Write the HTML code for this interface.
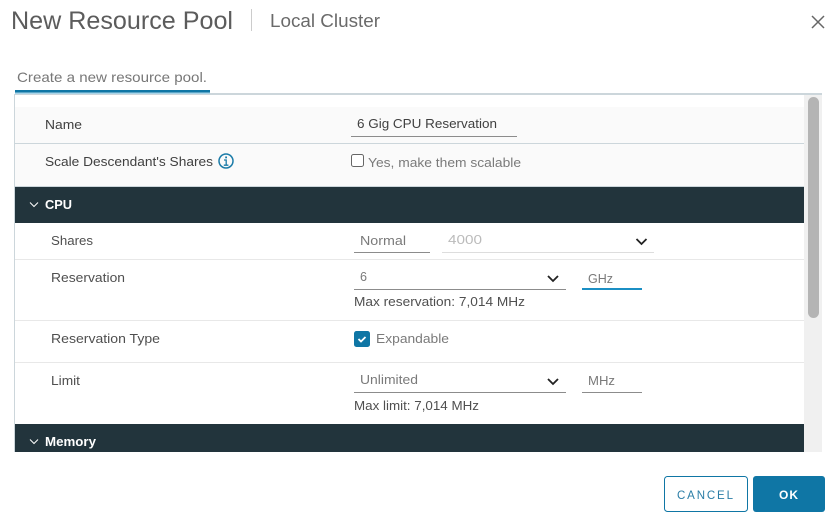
<!DOCTYPE html>
<html><head><meta charset="utf-8"><title>New Resource Pool</title>
<style>
html,body{margin:0;padding:0;background:#fff;width:833px;height:519px;overflow:hidden}
svg{display:block}
text{font-family:"Liberation Sans",sans-serif;font-size:13px;fill:#4f4f4f}
.g{fill:#7a7a7a}
.b{fill:#404040}
.w{fill:#fff;font-weight:bold}
</style></head><body>
<svg width="833" height="519" viewBox="0 0 833 519" xmlns="http://www.w3.org/2000/svg">
<text x="11" y="29" textLength="222" lengthAdjust="spacingAndGlyphs" style="font-size:25px;fill:#5c5c5c">New Resource Pool</text>
<rect x="251" y="9" width="1" height="22" fill="#ccc"/>
<text x="270" y="27" textLength="110" lengthAdjust="spacingAndGlyphs" style="font-size:18px;fill:#6a6a6a">Local Cluster</text>
<path d="M812 16L824 28M824 16L812 28" stroke="#666" stroke-width="1.500" fill="none"/>
<text x="17" y="82" textLength="190" lengthAdjust="spacingAndGlyphs" style="font-size:14px;fill:#777">Create a new resource pool.</text>
<rect x="15" y="93" width="807" height="2" fill="#ccd6db"/>
<rect x="15" y="90" width="195" height="3" fill="#0f76a5"/>
<rect x="15" y="92.500" width="195" height="1.500" fill="#a9d4e8"/>
<rect x="14" y="94" width="1" height="358" fill="#ccd6db"/>
<rect x="804" y="95" width="18" height="357" fill="#f0f0f0"/>
<rect x="808" y="97" width="11" height="221" rx="5.500" fill="#b4b4b4"/>
<rect x="15" y="107" width="789" height="79" fill="#fafafa"/>
<rect x="15" y="143" width="789" height="1" fill="#ccd6db"/>
<rect x="15" y="186" width="789" height="1" fill="#ccd6db"/>
<text x="45" y="129" textLength="37" lengthAdjust="spacingAndGlyphs" class="b">Name</text>
<text x="45" y="166" textLength="168" lengthAdjust="spacingAndGlyphs" class="b">Scale Descendant's Shares</text>
<circle cx="226" cy="161" r="7" fill="none" stroke="#1a7ba8" stroke-width="1.500"/>
<rect x="225.200" y="156.500" width="1.800" height="1.800" fill="#1a7ba8"/>
<path d="M224 160H226.200V165M223.800 165.200H228.400" stroke="#1a7ba8" stroke-width="1.300" fill="none"/>
<text x="357" y="128" textLength="140" lengthAdjust="spacingAndGlyphs" class="b">6 Gig CPU Reservation</text>
<rect x="351" y="136" width="166" height="1" fill="#8c8c8c"/>
<rect x="351.500" y="154.500" width="12" height="12" rx="2" fill="#fff" stroke="#666"/>
<text x="368" y="167" textLength="153" lengthAdjust="spacingAndGlyphs" class="g">Yes, make them scalable</text>
<rect x="15" y="187" width="789" height="36" fill="#22343c"/>
<path d="M30 202.500L34 206.500L38 202.500" stroke="#fff" stroke-width="1" fill="none"/>
<text x="45" y="209" textLength="27" lengthAdjust="spacingAndGlyphs" class="w">CPU</text>
<text x="51" y="245" textLength="42" lengthAdjust="spacingAndGlyphs">Shares</text>
<text x="360" y="245" textLength="46" lengthAdjust="spacingAndGlyphs" class="g">Normal</text>
<rect x="354" y="252" width="76" height="1" fill="#8c8c8c"/>
<text x="448" y="244" textLength="34" lengthAdjust="spacingAndGlyphs" style="fill:#bbb">4000</text>
<rect x="442" y="252" width="212" height="1" fill="#ddd"/>
<path d="M636.500 239L641.500 244L646.500 239" stroke="#222" stroke-width="1.800" fill="none"/>
<rect x="15" y="259" width="789" height="1" fill="#e8e8e8"/>
<text x="51" y="282" textLength="74" lengthAdjust="spacingAndGlyphs">Reservation</text>
<text x="360" y="281" textLength="7" lengthAdjust="spacingAndGlyphs" class="g">6</text>
<path d="M548 276L553 281L558 276" stroke="#222" stroke-width="1.800" fill="none"/>
<rect x="354" y="289" width="212" height="1" fill="#8c8c8c"/>
<text x="588" y="283" textLength="25" lengthAdjust="spacingAndGlyphs" class="g">GHz</text>
<rect x="582" y="288" width="60" height="2" fill="#1b8fc4"/>
<text x="354" y="306" textLength="171" lengthAdjust="spacingAndGlyphs">Max reservation: 7,014 MHz</text>
<rect x="15" y="320" width="789" height="1" fill="#e8e8e8"/>
<text x="51" y="343" textLength="109" lengthAdjust="spacingAndGlyphs">Reservation Type</text>
<rect x="354" y="331" width="16" height="16" rx="2.500" fill="#0f76a5"/>
<path d="M358.500 339L361 341.500L365.500 337" stroke="#fff" stroke-width="1.800" fill="none"/>
<text x="376" y="343" textLength="73" lengthAdjust="spacingAndGlyphs" class="g">Expandable</text>
<rect x="15" y="362" width="789" height="1" fill="#e8e8e8"/>
<text x="51" y="385" textLength="29" lengthAdjust="spacingAndGlyphs">Limit</text>
<text x="360" y="384" textLength="58" lengthAdjust="spacingAndGlyphs" class="g">Unlimited</text>
<path d="M548 379L553 384L558 379" stroke="#222" stroke-width="1.800" fill="none"/>
<rect x="354" y="392" width="212" height="1" fill="#8c8c8c"/>
<text x="588" y="385" textLength="27" lengthAdjust="spacingAndGlyphs" class="g">MHz</text>
<rect x="582" y="392" width="60" height="1" fill="#8c8c8c"/>
<text x="354" y="410" textLength="125" lengthAdjust="spacingAndGlyphs">Max limit: 7,014 MHz</text>
<rect x="15" y="424" width="789" height="28" fill="#22343c"/>
<path d="M30 439.500L34 443.500L38 439.500" stroke="#fff" stroke-width="1" fill="none"/>
<text x="45" y="446" textLength="51" lengthAdjust="spacingAndGlyphs" class="w">Memory</text>
<rect x="664.500" y="476.500" width="83" height="35" rx="3" fill="#fff" stroke="#0f76a5"/>
<text x="677" y="499" textLength="56" lengthAdjust="spacing" style="font-size:11.500px;fill:#2a7da6">CANCEL</text>
<rect x="753" y="476" width="72" height="36" rx="3" fill="#0f76a5"/>
<text x="779" y="499" textLength="19" lengthAdjust="spacing" class="w" style="font-size:12px">OK</text>
</svg>
</body></html>
